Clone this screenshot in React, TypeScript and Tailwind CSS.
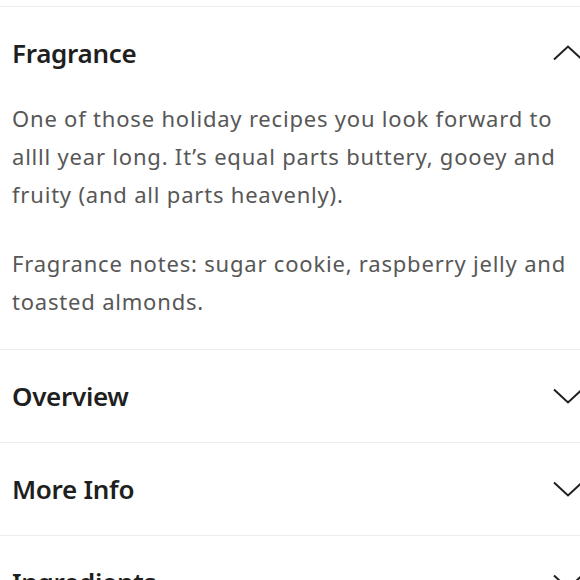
const font = { fontFamily: "'Noto Sans', 'Liberation Sans', sans-serif" };

function Chevron({ up }: { up?: boolean }) {
  return (
    <svg width="30" height="16" viewBox="0 0 30 16" fill="none" aria-hidden className="-mr-[3px] shrink-0">
      <path
        d={up ? "M1 14.5L15 1.5L29 14.5" : "M1 1.5L15 14.5L29 1.5"}
        stroke="#1f1f1f"
        strokeWidth="2"
      />
    </svg>
  );
}

function Header({ title, open }: { title: string; open?: boolean }) {
  return (
    <button type="button" className="flex h-[92px] w-full items-center justify-between pl-3 text-left">
      <span className="text-[26px] font-semibold tracking-[-0.3px] text-[#1f1f1f]">{title}</span>
      <Chevron up={open} />
    </button>
  );
}

export default function App() {
  return (
    <div className="h-[580px] w-[580px] overflow-hidden bg-white" style={font}>
      <div className="h-[6px]" />
      <div className="border-t border-[#ececec]">
        <Header title="Fragrance" open />
        <div className="flex flex-col gap-[31px] pb-[29px] pl-3 pr-3 text-[22px] leading-[38px] tracking-[0.8px] text-[#575757]">
          <p>
            One of those holiday recipes you look forward to allll year long. It’s equal parts buttery,
            gooey and fruity (and all parts heavenly).
          </p>
          <p>Fragrance notes: sugar cookie, raspberry jelly and toasted almonds.</p>
        </div>
      </div>
      <div className="border-t border-[#ececec]">
        <Header title="Overview" />
      </div>
      <div className="border-t border-[#ececec]">
        <Header title="More Info" />
      </div>
      <div className="border-t border-[#ececec]">
        <Header title="Ingredients" />
      </div>
    </div>
  );
}
